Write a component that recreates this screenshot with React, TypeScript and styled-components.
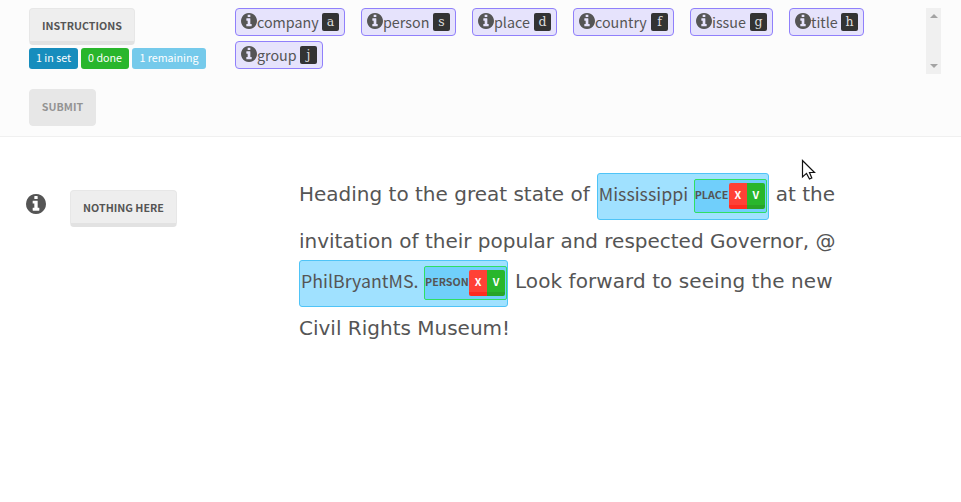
import React from "react";
import styled, { createGlobalStyle } from "styled-components";

const sans = `"Noto Sans CJK SC", "Open Sans", sans-serif`;

const GlobalStyle = createGlobalStyle`
  * { box-sizing: border-box; }
  body { margin: 0; background: #fff; color: #555; font-family: ${sans}; overflow: hidden; }
`;

const Page = styled.div`
  position: relative;
  width: 961px;
  height: 502px;
  overflow: hidden;
`;

const Header = styled.header`
  display: flex;
  height: 137px;
  padding: 8px 20px 0 29px;
  background: #fcfcfc;
  border-bottom: 1px solid #f0f0f0;
`;

const Controls = styled.div`
  display: flex;
  flex-direction: column;
  align-items: flex-start;
  width: 206px;
`;

const Button = styled.button<{ $width: number; $off?: boolean }>`
  display: flex;
  align-items: center;
  justify-content: center;
  width: ${(p) => p.$width}px;
  height: 37px;
  padding: ${(p) => (p.$off ? 0 : 3)}px 0 0;
  border: 1px solid #e7e7e7;
  border-bottom: ${(p) => (p.$off ? "1px solid #e7e7e7" : "4px solid #e2e2e2")};
  border-radius: 4px;
  background: ${(p) => (p.$off ? "#e7e7e7" : "#eee")};
  color: ${(p) => (p.$off ? "#939393" : "#555")};
  font: 700 10.7px/1 ${sans};
  white-space: nowrap;
`;

const Counts = styled.div`
  display: flex;
  gap: 3px;
  margin: 3px 0 20px;
`;

const Count = styled.span<{ $color: string; $width: number }>`
  display: flex;
  align-items: center;
  justify-content: center;
  width: ${(p) => p.$width}px;
  height: 21px;
  padding-bottom: 1px;
  border-radius: 3px;
  background: ${(p) => p.$color};
  color: #fff;
  font-size: 10.7px;
  line-height: 1;
  white-space: nowrap;
`;

const Labels = styled.div`
  display: flex;
  flex-wrap: wrap;
  align-content: flex-start;
  gap: 5px 16px;
  width: 691px;
  height: 66px;
`;

const Label = styled.div<{ $width: number }>`
  display: flex;
  align-items: center;
  width: ${(p) => p.$width}px;
  height: 28px;
  padding: 0 5px;
  border: 1px solid #9080fb;
  border-radius: 4px;
  background: #e6e3fc;
  font-size: 14.3px;
  line-height: 26px;
  white-space: nowrap;
`;

const Key = styled.kbd`
  display: flex;
  align-items: center;
  justify-content: center;
  width: 17px;
  height: 18px;
  margin-left: auto;
  padding-top: 1px;
  border-radius: 2px;
  background: #333;
  color: #ddd;
  font: 12.5px/1 "DejaVu Serif", serif;
`;

const Scrollbar = styled.div`
  display: flex;
  flex-direction: column;
  justify-content: space-between;
  align-items: center;
  width: 15px;
  height: 66px;
  padding: 6px 0;
  background: #f0f0f0;
`;

const Arrow = styled.i<{ $down?: boolean }>`
  width: 0;
  height: 0;
  border: 4px solid transparent;
  border-top: ${(p) => (p.$down ? "4px solid #a3a3a3" : "0")};
  border-bottom: ${(p) => (p.$down ? "0" : "4px solid #a3a3a3")};
`;

const Main = styled.main`
  display: flex;
  padding: 36px 0 0 26px;
`;

const Guide = styled.aside`
  display: flex;
  align-items: flex-start;
  width: 273px;
  padding-top: 17px;
`;

const GuideIcon = styled.div`
  display: flex;
  width: 44px;
  padding-top: 4px;
`;

const Passage = styled.article`
  color: #555;
  font-family: "DejaVu Sans", sans-serif;
  font-size: 20px;
`;

const Line = styled.div<{ $plain?: boolean }>`
  display: flex;
  align-items: center;
  height: ${(p) => (p.$plain ? 40 : 47)}px;
  padding-top: ${(p) => (p.$plain ? 6 : 0)}px;
  white-space: pre;
`;

const Run = styled.span<{ $spacing?: number; $left?: number }>`
  margin-left: ${(p) => p.$left ?? 0}px;
  padding-bottom: 5px;
  line-height: 24px;
  letter-spacing: ${(p) => p.$spacing ?? 0}px;
`;

const Entity = styled.span<{ $width: number; $left?: number; $flush?: boolean }>`
  display: flex;
  align-items: flex-start;
  justify-content: space-between;
  width: ${(p) => p.$width}px;
  height: 47px;
  margin-left: ${(p) => p.$left ?? 0}px;
  padding: 5px ${(p) => (p.$flush ? 0 : 1)}px 0 1px;
  border: 1px solid #4fc4f7;
  border-radius: 3px;
  background: #a0e1ff;
  font: 17.8px/28px ${sans};
`;

const Tag = styled.span<{ $width: number }>`
  display: flex;
  align-items: center;
  width: ${(p) => p.$width}px;
  height: 34px;
  padding-right: 1px;
  border: 1px solid #2fdf64;
  border-radius: 2px;
  background: #70cffb;
  font: 700 10.7px/1 ${sans};
`;

const TagName = styled.span`
  flex: 1;
  padding-bottom: 1px;
`;

const Action = styled.button<{ $accept?: boolean }>`
  display: flex;
  align-items: center;
  justify-content: center;
  width: 18px;
  height: 26px;
  padding: 2px 0 0;
  border: 0;
  border-bottom: 4px solid ${(p) => (p.$accept ? "#28a428" : "#ff2c20")};
  border-radius: ${(p) => (p.$accept ? "0 2px 2px 0" : "2px 0 0 2px")};
  background: ${(p) => (p.$accept ? "#29b62c" : "#ff4136")};
  color: #fff;
  font: 700 10.7px/1 ${sans};
`;

const Pointer = styled.svg`
  position: absolute;
  left: 801px;
  top: 159px;
`;

const InfoSvg = styled.svg`
  flex: none;
  display: block;
`;

const Info = ({ size }: { size: number }) => (
  <InfoSvg width={size} height={size} viewBox="128 128 1536 1536" fill="#555">
    <path d="M1152 1376v-160q0-14-9-23t-23-9h-96v-512q0-14-9-23t-23-9h-320q-14 0-23 9t-9 23v160q0 14 9 23t23 9h96v320h-96q-14 0-23 9t-9 23v160q0 14 9 23t23 9h448q14 0 23-9t9-23zm-128-896v-160q0-14-9-23t-23-9h-192q-14 0-23 9t-9 23v160q0 14 9 23t23 9h192q14 0 23-9t9-23zm640 416q0 209-103 385.5t-279.5 279.5-385.5 103-385.5-103-279.5-279.5-103-385.5 103-385.5 279.5-279.5 385.5-103 385.5 103 279.5 279.5 103 385.5z" />
  </InfoSvg>
);

const ChipIcon = styled.span`
  display: flex;
  width: 16px;
  flex: none;
  padding-bottom: 2px;
`;

const labels: [string, string, number][] = [
  ["company", "a", 110],
  ["person", "s", 95],
  ["place", "d", 85],
  ["country", "f", 101],
  ["issue", "g", 83],
  ["title", "h", 75],
  ["group", "j", 88],
];

type AnnotationProps = {
  text: string;
  tag: string;
  width: number;
  tagWidth: number;
  left?: number;
  flush?: boolean;
};

const Annotation = (p: AnnotationProps) => (
  <Entity $width={p.width} $left={p.left} $flush={p.flush}>
    <span>{p.text}</span>
    <Tag $width={p.tagWidth}>
      <TagName>{p.tag}</TagName>
      <Action>X</Action>
      <Action $accept>V</Action>
    </Tag>
  </Entity>
);

export default function App() {
  return (
    <Page>
      <GlobalStyle />
      <Header>
        <Controls>
          <Button $width={106}>INSTRUCTIONS</Button>
          <Counts>
            <Count $color="#178dbd" $width={49}>1 in set</Count>
            <Count $color="#29b62c" $width={48}>0 done</Count>
            <Count $color="#75caeb" $width={74}>1 remaining</Count>
          </Counts>
          <Button $width={67} $off>SUBMIT</Button>
        </Controls>
        <Labels>
          {labels.map(([name, key, width]) => (
            <Label key={name} $width={width}>
              <ChipIcon><Info size={16} /></ChipIcon>
              <span>{name}</span>
              <Key>{key}</Key>
            </Label>
          ))}
        </Labels>
        <Scrollbar>
          <Arrow />
          <Arrow $down />
        </Scrollbar>
      </Header>
      <Main>
        <Guide>
          <GuideIcon><Info size={20} /></GuideIcon>
          <Button $width={107}>NOTHING HERE</Button>
        </Guide>
        <Passage>
          <Line>
            <Run>Heading to the great state of</Run>
            <Annotation text="Mississippi" tag="PLACE" width={172} tagWidth={73} left={7} />
            <Run $left={7}>at the</Run>
          </Line>
          <Line $plain>
            <Run $spacing={-0.01}>invitation of their popular and respected Governor, @</Run>
          </Line>
          <Line>
            <Annotation text="PhilBryantMS." tag="PERSON" width={209} tagWidth={83} flush />
            <Run $left={7} $spacing={0.07}>Look forward to seeing the new</Run>
          </Line>
          <Line $plain>
            <Run>Civil Rights Museum!</Run>
          </Line>
        </Passage>
      </Main>
      <Pointer width="16" height="24" viewBox="0 0 16 24">
        <path d="M1.5 1.5V18l4-3.6 3 5.6 2.3-1-2.3-5.5h5z" fill="#fff" stroke="#111" strokeWidth="1.2" />
      </Pointer>
    </Page>
  );
}
